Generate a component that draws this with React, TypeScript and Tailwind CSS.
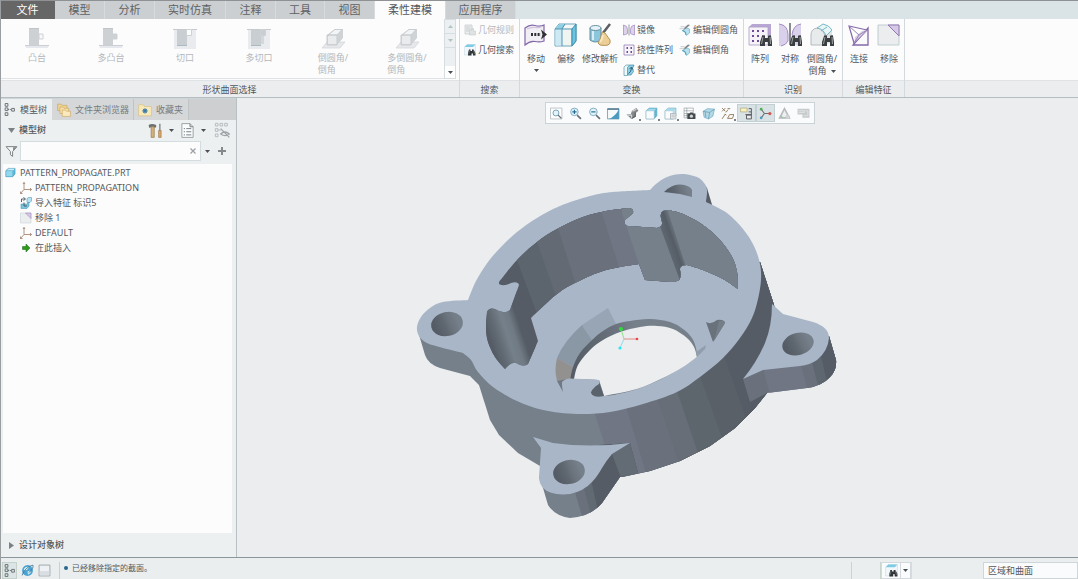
import React, { useState } from 'react';
import type { ReactNode } from 'react';
import clsx from 'clsx';

interface IconProps {
  size?: number;
  children: ReactNode;
}

// All icons are drawn on a 24 unit grid
function Icon({ size = 24, children }: IconProps) {
  return (
    <svg width={size} height={size} viewBox="0 0 24 24" fill="none" className="shrink-0" aria-hidden="true">
      {children}
    </svg>
  );
}

function Caret({ up = false, muted = false }: { up?: boolean; muted?: boolean }) {
  return (
    <svg width="5" height="3" viewBox="0 0 5 3" className="shrink-0" aria-hidden="true">
      <path d={up ? 'M0 3h5L2.5 0z' : 'M0 0h5L2.5 3z'} fill={muted ? '#b3c4bd' : '#4b5054'} />
    </svg>
  );
}

const binoculars = (
  <g>
    <path d="M14 13q1.500-1 3 0v2h3v-2q1.500-1 3 0l1 6v4h-4v-4h-3v4h-5v-4z" fill="#3a3e40" />
    <path d="M15 14l-1.500 7M22 14l.5 7" stroke="#a7abac" strokeWidth=".9" />
    <path d="M14.500 12.500h2.500M20.500 12.500H23" stroke="#6f7476" />
  </g>
);

const bossIcon = (filled: boolean) => (
  <>
    <path d="M4 1h10v17H4z" fill="#cdd1d4" />
    <path d="M4 1h10v1H4z" fill="#bfc5c8" />
    <path d="M14 7h4v5h-4z" fill={filled ? '#cdd1d4' : '#f7f8f9'} stroke="#cdd1d4" />
    <path d="M0 18h24l-1 3H1z" fill="#e6e8ed" />
    <path d="M0 18.500h24" stroke="#cbd0d4" />
  </>
);

const cutIcon = (filled: boolean) => (
  <>
    <path d="M1 2h22v20H1z" fill="#e9ebef" />
    <path d="M0 2.500h24" stroke="#c6cacf" />
    <path d="M4 3h10v16H4z" fill="#c9ced2" />
    <path d="M13.500 2.500h5v6h-5z" fill={filled ? '#c9ced2' : '#fbfcfc'} stroke="#cdd2d5" />
    {filled && <path d="M14 9h3v8h-3z" fill="#d4d8db" />}
    <path d="M4 18.500h10" stroke="#a9bac3" />
  </>
);

const roundIcon = (
  <>
    <path d="M1 21l5-6h18l-5 6z" fill="#e6e8ea" stroke="#d3d7da" strokeWidth=".8" />
    <path d="M6 18V8l8-6h8v9l-6 7z" fill="#cfd3d5" />
    <path d="M7 17V9q1-1 3-1h6v9z" fill="#e9ebec" />
    <path d="M7 8l7-5.500h7L16 8z" fill="#f3f4f5" stroke="#c3c8ca" strokeWidth=".8" />
    <path d="M6 18V8h10v10z" stroke="#c8cdcf" />
  </>
);

const rulesIcon = (
  <>
    <path d="M2 2h14v18H2z" fill="#eceeee" stroke="#c4c8ca" strokeWidth="1.500" />
    <path d="M4 6h9M4 10h9M4 14h6" stroke="#c9cdcf" strokeWidth="2" />
    <path d="M11 12h5V9h3v5h4v8H11z" fill="#e0e3e4" stroke="#bcc1c4" />
  </>
);

const geoSearchIcon = (
  <>
    <path d="M1 6l5-5h17v15l-5 6H1z" fill="#f1f7fa" stroke="#c3d8e0" />
    <path d="M1 6l5-5h17l-5 5z" fill="#7fcbe4" />
    <path d="M10 11h3v3h3v-3h3l4 7v5h-5v-4h-3v4H8v-5z" fill="#303436" />
    <path d="M11 13l-1.500 7M19 13l2.500 7" stroke="#868b8e" strokeWidth="1.200" />
  </>
);

const moveIcon = (
  <>
    <path d="M1 5q5-4 10-2.500T20 2v16q-4 1.500-9 .5T1 22z" fill="#f1eff4" stroke="#8468a8" strokeWidth="1.200" />
    <path d="M3 6q4-2 8-1.500t7-1" stroke="#cfc3de" strokeWidth="1.200" />
    <path d="M7 11.500h10" stroke="#2e3032" strokeWidth="3" strokeDasharray="2 1.300" />
    <path d="M17 6.500l6 5-6 5 1.500-5z" fill="#2e3032" />
  </>
);

const offsetIcon = (
  <>
    <path d="M1 6l4-5h17v17l-4 5H1z" fill="#f5f8fa" stroke="#6ba3b9" />
    <path d="M1.500 6.500H8v16H1.500z" fill="#cde9f3" />
    <path d="M1.500 6L5 1.500h6L8 6z" fill="#8dd0e6" />
    <path d="M8 6l3-5M8 6v17M1 6h17v17" stroke="#4f93ae" />
    <path d="M9 7h8v15H9z" fill="#f1f5f2" />
    <path d="M18 6l4-5v17l-4 5z" fill="#6ac3e0" stroke="#3f8fae" />
  </>
);

const analyticIcon = (
  <>
    <path d="M2 5v12q5 4 11 0V5z" fill="#8cc6dc" stroke="#668d9c" />
    <ellipse cx="7.500" cy="5" rx="5.500" ry="2.500" fill="#e5f2f7" stroke="#668d9c" />
    <path d="M5 8v9" stroke="#d7eef6" strokeWidth="2" />
    <path d="M22 1l-7 9" stroke="#5b5f61" strokeWidth="2.500" />
    <path d="M14 9l3 1 5 7q1 4-2 5t-8 0l-2-2q3-4 4-11z" fill="#edcf96" stroke="#b39457" />
    <path d="M15 12q-1 5-3 7" stroke="#f8e7c2" strokeWidth="2" />
  </>
);

const mirrorIcon = (
  <>
    <path d="M1 2q8 1 8 9v8q-3 2-8 3zM23 2q-8 1-8 9v8q3 2 8 3z" fill="#dcd2ea" stroke="#9980ba" strokeWidth="1.300" />
    <path d="M12 1v22" stroke="#8b9094" strokeWidth="1.800" />
  </>
);

const patternIcon = (
  <>
    <path d="M2 2h20v20H2z" fill="#f7f5fa" stroke="#8e78ad" strokeWidth="1.500" />
    <path d="M7 6h3v4H7zM15 6h3v4h-3zM7 14h3v4H7zM15 14h3v4h-3z" fill="#6d4b96" />
  </>
);

const replaceIcon = (
  <>
    <path d="M2 6l4-4h7v17l-4 4H2z" fill="#f1f8fa" stroke="#4f93ae" strokeWidth="1.300" />
    <path d="M9 7l4-5h9l-3 7 2 6-5 7H9z" fill="#8ccfe6" stroke="#3b83a1" strokeWidth="1.300" />
    <path d="M11 19q5-2 6-11M13 10l4-4 3 5" stroke="#23546b" strokeWidth="1.800" />
  </>
);

const editRoundIcon = (
  <>
    <path d="M1 9h9M3 5h8" stroke="#d0d4d6" strokeWidth="2.500" />
    <path d="M9 11l6-3 6 2v8l-6 5q0-7-6-8z" fill="#b9e0ee" stroke="#68b0cb" strokeWidth="1.300" />
    <path d="M22 2l-9 8-3 1 1-4 7-6" fill="#83888b" />
    <path d="M6 13l6 2 2 7" stroke="#4e9fbe" strokeWidth="2" />
  </>
);

const patternFindIcon = (
  <>
    <path d="M1 4l3-3h19v16l-3 4H1z" fill="#b9a7d3" />
    <path d="M1 4h19v18H1z" fill="#f5f3f8" stroke="#a999c2" strokeWidth=".8" />
    {[8, 13, 18].map(y => (
      <path key={y} d={`M4 ${y - 1}h2v2H4zM9 ${y - 1}h2v2H9zM14 ${y - 1}h2v2h-2z`} fill="#6d4b96" />
    ))}
    {binoculars}
  </>
);

const symmetryFindIcon = (
  <>
    <path d="M1 1q9 1 9 11v6q-2 5-9 5zM23 1q-8 1-9 11v6q2 5 9 5z" fill="#d9d0ec" />
    <path d="M1 1q9 1 9 11v6q-2 4-7 5M23 1q-8 1-9 11" stroke="#a48dc4" />
    <path d="M12 0v22" stroke="#898d90" strokeWidth="2" />
    {binoculars}
  </>
);

const roundFindIcon = (
  <>
    <path d="M1 22V12Q1 6 7 5q7 1 8 9v8z" fill="#e8ebec" stroke="#b5babc" />
    <path d="M15 22v-9l7-6v12z" fill="#dde1e3" />
    <path d="M7 5l6-4q6 1 9 6l-6 6Q14 6 7 5z" fill="#e9f6f8" stroke="#77b9c2" />
    <path d="M17 4l-6 4" stroke="#77b9c2" />
    {binoculars}
  </>
);

const connectIcon = (
  <>
    <path d="M6 22h15V5z" fill="#faf9fc" stroke="#8468a8" strokeWidth="1.300" />
    <path d="M2 3l18 4L7 20z" fill="#fff" stroke="#8468a8" strokeWidth="1.200" />
    <path d="M7 20l13-13-5 1-7 6z" fill="#d9d0e6" />
    <path d="M2 3l10 9 8-5M7 20l5-8" stroke="#9a83b8" />
  </>
);

const removeIcon = (
  <>
    <path d="M1 2h21v20H1z" fill="#ebedee" stroke="#c0cdd0" />
    <path d="M11 2h11v11z" fill="#d5c9e6" stroke="#9178b3" />
  </>
);

const modelTreeIcon = (
  <g stroke="#6c7174" strokeWidth="1.800">
    <path d="M4 1h5v5H4zM4 9h5v5H4zM4 18h5v5H4zM16 10h5v5h-5z" />
    <path d="M9 12h7" strokeDasharray="2 1.500" />
  </g>
);

const foldersIcon = (
  <>
    <path d="M1 2h6l2 2h8v9H1z" fill="#f0d292" stroke="#c4a05a" />
    <path d="M5 7h5l2 2h8v9H5z" fill="#f7dfa9" stroke="#c4a05a" />
    <path d="M9 12h5l2 2h7v9H9z" fill="#fbe9be" stroke="#c4a05a" />
  </>
);

const favoriteIcon = (
  <>
    <path d="M1 3h8l2 3h12v16H1z" fill="#f9e8b8" stroke="#d8bb78" />
    <path d="M12 9v9M7.500 13.500h9M9 10.500l6 6M15 10.500l-6 6" stroke="#3c7ca6" strokeWidth="2" />
  </>
);

const csysIcon = (
  <g stroke="#a07b63" strokeWidth="1.600">
    <path d="M8 1v14h15M8 15l-7 8" />
    <path d="M6 4l2-3 2 3M20 12l3 3-3 3M1 19v4h4" />
  </g>
);

const importIcon = (
  <>
    <path d="M2 14h12l4-4v8l-4 5H2z" fill="#7ac6e0" stroke="#3d8bad" />
    <path d="M14 3l3-2h6v7l-3 3h-6z" fill="#b3e2f1" stroke="#3d8bad" />
    <path d="M3 10V4h6M7 1l4 3-4 3M8 11v7h6" stroke="#43505a" strokeWidth="1.800" />
  </>
);

const partIcon = (
  <>
    <path d="M2 8l5-5h15v12l-5 6H2z" fill="#5cbfe2" stroke="#347f9f" />
    <path d="M3 8l5-4h13l-4 4z" fill="#c9edf8" />
    <path d="M2 8h15v13H2z" fill="#92d8ee" stroke="#4a9cbd" />
  </>
);

const insertIcon = <path d="M5 9h7V4l8 8-8 8v-5H5z" fill="#2f9a1e" stroke="#19630f" />;

const toolsIcon = (
  <>
    <path d="M1 3q5-3 12 0v4H9v-1H6L2 8z" fill="#6c7073" />
    <path d="M5 6h5v17H5z" fill="#d6b07a" stroke="#8d6e42" />
    <path d="M19 1v11" stroke="#767b7e" strokeWidth="2" />
    <path d="M17 12h4v11h-4z" fill="#e0a968" stroke="#8d6e42" />
  </>
);

const docIcon = (
  <>
    <path d="M3 1h13l5 5v17H3z" fill="#fbfcfc" stroke="#979ea2" strokeWidth="1.500" />
    <path d="M16 1v5h5M6 9h2M6 14h2M6 19h2M10 9h8M10 14h8M10 19h8" stroke="#6f7880" strokeWidth="1.500" />
  </>
);

const hiddenTreeIcon = (
  <g stroke="#b2b6b8" strokeWidth="1.300">
    <path d="M2 2h4v4H2zM2 10h4v4H2zM2 18h4v4H2zM9 2h4v4H9zM16 2h4v4h-4zM6 12h5" />
    <path d="M10 18q6-6 13 0-6 5-13 0zM10 10l13 13" stroke="#9da2a5" strokeWidth="1.800" />
  </g>
);

const filterIcon = (
  <>
    <path d="M2 3h20l-8 9v9l-4-3v-6z" fill="#f5f6f6" stroke="#7b8184" strokeWidth="1.800" />
    <path d="M15 4h7l-7 7z" fill="#7f8588" />
  </>
);

const zoomIcon = (mark: string) => (
  <>
    <path d="M15 15l7 7" stroke="#6a7073" strokeWidth="3" />
    <circle cx="10" cy="9" r="7" fill="#e4f3f9" stroke="#6c9fb7" strokeWidth="1.500" />
    <path d={mark} stroke="#276f96" strokeWidth="2.200" />
  </>
);

const cube = (fill: string) => (
  <>
    <path d="M2 7l6-5h14v14l-5 6H2z" fill={fill} stroke="#79aabe" strokeWidth="1.200" />
    <path d="M2 7h15v15H2z" fill="#f9fbfc" stroke="#a6bcc5" />
    <path d="M3 7l5-4h13l-4 4z" fill="#a6dbec" />
  </>
);

const viewTools: { name: string; icon: ReactNode; menu?: boolean; active?: boolean }[] = [
  {
    name: '重新调整',
    icon: (
      <>
        <path d="M1 2h21v20H1z" fill="#fff" stroke="#b3b9bc" strokeWidth="1.500" />
        <circle cx="11" cy="11" r="5.500" fill="#e4f3f9" stroke="#5f93ab" strokeWidth="1.500" />
        <path d="M15 15l6 6" stroke="#6a7073" strokeWidth="2.500" />
      </>
    ),
  },
  { name: '放大', icon: zoomIcon('M6 9h8M10 5v8') },
  { name: '缩小', icon: zoomIcon('M6 9h8') },
  {
    name: '重画',
    icon: (
      <>
        <path d="M1 3h21v19H1z" fill="#f6fafb" stroke="#6b98ad" strokeWidth="1.500" />
        <path d="M22 4v18H3Q15 18 22 4z" fill="#4c9abd" />
        <path d="M1 4h21" stroke="#37627a" strokeWidth="2" />
      </>
    ),
  },
  {
    name: '渲染',
    menu: true,
    icon: (
      <>
        <path d="M1 14l8-1 2-6 8-5 4 5-5 4v7l-8 4z" fill="#85898c" />
        <path d="M3 15h7l1 6M12 8l7-4" stroke="#d4d7d8" strokeWidth="2" />
        <path d="M17 10v7l-6 4" stroke="#565b5e" strokeWidth="2" />
      </>
    ),
  },
  { name: '显示样式', menu: true, icon: cube('#58b8d8') },
  {
    name: '已保存方向',
    menu: true,
    icon: (
      <>
        {cube('#b9dfec')}
        <path d="M12 12h10v10H12z" fill="#e9ecee" stroke="#a9b0b3" strokeWidth="1.500" />
        <path d="M14 15h6M14 18h6" stroke="#979ea2" />
      </>
    ),
  },
  {
    name: '视图管理器',
    icon: (
      <>
        <path d="M2 2h17v18H2zM2 7h17M2 12h17M2 16h10M7 2v18" fill="#fff" stroke="#8f979b" strokeWidth="1.200" />
        <path d="M8 12h4l1-2h5l1 2h4v10H8z" fill="#43484b" />
        <circle cx="15.500" cy="17" r="3" fill="#cfd4d6" />
      </>
    ),
  },
  {
    name: '透视图',
    icon: (
      <>
        <path d="M2 8l8-5 13 1-3 13-8 5-8-3z" fill="#b3d8e6" stroke="#6fabc4" strokeWidth="1.300" />
        <path d="M2 8l12 2 9-6M14 10l-2 12M7 19L6 9" stroke="#4a86a0" />
      </>
    ),
  },
  {
    name: '基准显示',
    menu: true,
    icon: (
      <g stroke="#8b6f50" strokeWidth="1.600">
        <path d="M2 2l6 6M8 2L2 8M12 3h5M9 10l4-5" />
        <path d="M2 22l6-9M7 13l3 2M12 21h9l3-7h-8z" />
      </g>
    ),
  },
  {
    name: '注释显示',
    active: true,
    icon: (
      <>
        <path d="M1 2h12v7H1z" fill="#fbf3bd" stroke="#a9a278" strokeWidth="1.200" />
        <path d="M16 3h5v6h-5M10 14h11M21 9v6" stroke="#585d60" strokeWidth="1.800" />
        <path d="M12 15h9v7h-9z" fill="#e9ecee" stroke="#585d60" strokeWidth="1.800" />
      </>
    ),
  },
  {
    name: '旋转中心',
    active: true,
    icon: (
      <>
        <path d="M10 12L4 4M10 12h10M10 12l-6 8" stroke="#6c7174" strokeWidth="2" />
        <circle cx="4" cy="4" r="2.500" fill="#4fae57" />
        <circle cx="20" cy="12" r="3" fill="#cf5750" />
        <circle cx="4" cy="20" r="2.500" fill="#4c9ac2" />
      </>
    ),
  },
  {
    name: '模拟',
    icon: (
      <>
        <path d="M12 3l9 17H3z" stroke="#b7bbbd" strokeWidth="3" fill="#eceeef" />
        <circle cx="18" cy="18" r="4" fill="#cfd3d4" />
        <path d="M5 15l4 6" stroke="#a2c4af" strokeWidth="2" />
      </>
    ),
  },
  {
    name: '暂停',
    icon: (
      <>
        <path d="M1 3h22v17H10v-6H1z" fill="#c7cbcd" />
        <path d="M3 7h11v3H3M16 7h4v9h-8" stroke="#e4e7e8" strokeWidth="1.500" />
      </>
    ),
  },
];

const menuTabs = [
  { name: '模型', cls: 'w-[50px]' },
  { name: '分析', cls: 'w-[50px]' },
  { name: '实时仿真', cls: 'w-[71px]' },
  { name: '注释', cls: 'w-[50px]' },
  { name: '工具', cls: 'w-[49px]' },
  { name: '视图', cls: 'w-[50px]' },
  { name: '柔性建模', cls: 'w-[71px]' },
  { name: '应用程序', cls: 'w-[70px]' },
];

const gallery = [
  { name: ['凸台'], icon: bossIcon(false) },
  { name: ['多凸台'], icon: bossIcon(true) },
  { name: ['切口'], icon: cutIcon(false) },
  { name: ['多切口'], icon: cutIcon(true) },
  { name: ['倒圆角/', '倒角'], icon: roundIcon },
  { name: ['多倒圆角/', '倒角'], icon: roundIcon },
];

const treeRows = [
  { name: 'PATTERN_PROPAGATION', icon: csysIcon },
  { name: '导入特征 标识5', icon: importIcon },
  { name: '移除 1', icon: removeIcon },
  { name: 'DEFAULT', icon: csysIcon },
  { name: '在此插入', icon: insertIcon },
];

function Group({ title, className, children }: { title: string; className?: string; children: ReactNode }) {
  return (
    <section className={clsx('flex flex-col border-r border-[#d3d9dc]', className)}>
      <div className="flex h-[61px] bg-[#fcfcfd]">{children}</div>
      <h2 className="flex h-[17px] items-center justify-center border-t border-[#e0e3e5] bg-[#ebedef] pt-px">{title}</h2>
    </section>
  );
}

function BigButton({ label, icon, className, menu }: { label: string[]; icon: ReactNode; className: string; menu?: boolean }) {
  const last = label.length - 1;
  return (
    <button className={clsx('flex flex-col items-center pt-1 hover:bg-[#e6eff3]', className)}>
      <Icon>{icon}</Icon>
      <span className="mt-1.5 flex flex-col items-center whitespace-nowrap leading-3">
        {label.map((line, i) => (
          <span key={line} className="flex items-center gap-1">
            {line}
            {menu && last > 0 && i === last && <Caret />}
          </span>
        ))}
      </span>
      {menu && last === 0 && <span className="mt-1"><Caret /></span>}
    </button>
  );
}

function SmallButton({ label, icon, disabled }: { label: string; icon: ReactNode; disabled?: boolean }) {
  return (
    <button
      disabled={disabled}
      className={clsx('flex h-5 items-center gap-0.5 whitespace-nowrap', disabled && 'text-[#b6babc]')}
    >
      <Icon size={12}>{icon}</Icon>
      {label}
    </button>
  );
}

// Smooth curve through "x,y x,y ..." points, continued from the first one
function curve(text: string, start = 'M') {
  const p = text.split(' ').map(s => s.split(',').map(Number));
  let d = `${start}${p[0][0]} ${p[0][1]}`;
  for (let i = 0; i < p.length - 1; i++) {
    const a = p[i - 1] ?? p[i];
    const b = p[i];
    const c = p[i + 1];
    const e = p[i + 2] ?? c;
    d += `C${b[0] + (c[0] - a[0]) / 6} ${b[1] + (c[1] - a[1]) / 6} ${c[0] - (e[0] - b[0]) / 6} ${c[1] - (e[1] - b[1]) / 6} ${c[0]} ${c[1]}`;
  }
  return d;
}

const topFace =
  curve('468,300 476,281 488,262 501,247 517,232 537,218 560,206 590,196 613,192 650,190') +
  curve('650,190 656,184 667,177 682,174 697,177 704,183 707,190 706,202', 'L') +
  curve('706,202 727,213 743,229 754,246 760,264 761,280 758,299 752,318 740,338 723,358 700,377 677,392 643,404 610,412 577,414 543,410 517,401 493,387 478,372 471,360 463,353', 'L') +
  curve('463,353 443,348 427,343 419,336 417,327 421,317 430,308 443,302 468,300', 'L') +
  'z';

const wellOutline =
  curve('499,282 517,260 537,242 557,229 583,217 606,211 629,208') +
  'Q634 209 633 213L625 220Q624 226 628 226L657 228Q663 227 662 222Q659 213 663 211' +
  curve('668,210 683,214 703,225 720,240 732,257 737,272 738,289', 'L') +
  curve('738,289 723,279 703,270 687,265', 'L') +
  'Q679 265 680 270Q682 280 677 281Q674 282 671 282L645 280L639 264' +
  curve('639,264 620,267 600,272 577,282 557,294 531,318', 'L') +
  'L538 341L528 364Q524 367 518 364Q512 360 505 369' +
  curve('505,369 495,357 488,342 486,328 487,312', 'L') +
  'Q489 307 495 309Q504 315 510 310L519 285Q518 281 511 283Q504 287 499 284z';

// Shaded part. The coordinates are those of the whole work area.
function PartModel() {
  return (
    <svg viewBox="237 98 841 459" className="block h-full w-full" role="img" aria-label="PATTERN_PROPAGATE">
      <defs>
        <linearGradient id="bore" x1="0" x2="1" y1="0.15" y2="0">
          <stop offset="0.05" stopColor="#555c65" />
          <stop offset="0.35" stopColor="#5f6771" />
          <stop offset="0.55" stopColor="#6c747e" />
          <stop offset="0.8" stopColor="#75808a" />
        </linearGradient>
        <linearGradient id="pocket" gradientUnits="userSpaceOnUse" x1="488" y1="340" x2="527" y2="327">
          <stop offset="0.05" stopColor="#555c65" />
          <stop offset="0.25" stopColor="#626b74" />
          <stop offset="0.48" stopColor="#75808a" />
          <stop offset="0.66" stopColor="#707a84" />
          <stop offset="0.84" stopColor="#555c65" />
        </linearGradient>
        <linearGradient id="pillar" gradientUnits="userSpaceOnUse" x1="654" y1="228" x2="674" y2="221">
          <stop offset="0" stopColor="#74808a" />
          <stop offset="0.35" stopColor="#5d666f" />
          <stop offset="0.65" stopColor="#555c65" />
          <stop offset="1" stopColor="#76818b" />
        </linearGradient>
        <linearGradient id="rim" gradientUnits="userSpaceOnUse" x1="571" y1="370" x2="697" y2="345">
          <stop offset="0" stopColor="#555c65" />
          <stop offset="0.25" stopColor="#606872" />
          <stop offset="0.45" stopColor="#6f7683" />
          <stop offset="0.55" stopColor="#75808a" />
          <stop offset="1" stopColor="#75808a" />
        </linearGradient>
        <clipPath id="bodyClip">
          <path d="M470 340L479 385L490 420L499 435L518 453L540 466L580 477L622 477L650 471L680 461L710 446L735 428L755 408L767 393L779 340L774 305L760 262L600 250z" />
        </clipPath>
        <clipPath id="wellClip">
          <path d={wellOutline} />
        </clipPath>
        <clipPath id="lowerLug">
          <path d="M539 477L543 488L548 505Q555 516 570 518Q590 517 602 503L620 477L638 473L630 443L600 445z" />
        </clipPath>
        <clipPath id="rightLug">
          <path d="M743 379L750 402L767 393L807 388Q822 386 830 377Q837 370 836 360L829 336L790 350z" />
        </clipPath>
      </defs>

      {/* lug behind the ring */}
      <path d="M704 184L707 188L713 208L700 206z" fill="#555c65" />

      {/* outer wall, facet by facet */}
      <g clipPath="url(#bodyClip)">
        <path d="M460 240H800V490H460z" fill="#75808a" />
        <path d="M592 405L616 480L800 490V240H592z" fill="#717685" />
        <path d="M624 400L648 480H800V240H624z" fill="#6a717c" />
        <path d="M655 392L683 475H800V240H655z" fill="#676e78" />
        <path d="M676 388L702 465H800V240H676z" fill="#5d656d" />
        <path d="M698 370L728 455H800V240H698z" fill="#596068" />
        <path d="M722 350L752 435H800V240H722z" fill="#555c65" />
        <path d="M620 478L650 472L680 462L710 447L735 429L755 409" stroke="#505761" strokeWidth="2" fill="none" />
      </g>

      {/* left lug side */}
      <path d="M417 328L425 355Q428 364 440 368L470 376L479 385L490 390L465 340z" fill="#75808a" />

      {/* top face */}
      <path d={topFace} fill="#a9b6c8" />
      <path d="M664 192Q672 184 680 184.500Q690 185 692 190L692 197L680 194z" fill="url(#bore)" />

      {/* well walls */}
      <g clipPath="url(#wellClip)">
        <path d="M480 200H745V380H480z" fill="#555c65" />
        <path d="M517 260L539 319L745 320V200H517z" fill="#5c656d" />
        <path d="M537 242L556 296L745 300V200H537z" fill="#636a74" />
        <path d="M557 225L576 285L745 300V200H557z" fill="#6a717c" />
        <path d="M601 210L620 270L745 300V200H601z" fill="#717685" />
        <path d="M622 213L645 282L745 300V200H622z" fill="#75808a" />
        <path d="M652 205L682 286L692 286L666 205z" fill="url(#pillar)" />
        <path d="M482 300L508 300L518 290L545 376H482z" fill="url(#pocket)" />
      </g>

      {/* counterbore */}
      <path d="M608 308L582 325L592 340L616 324z" fill="#98a5b5" />
      <path d="M582 325Q564 341 557 358L573 367Q580 352 592 340z" fill="#8a97a5" />
      <path d="M557 358Q554 370 557 381L571 380L573 367z" fill="#92918f" />
      <path d="M557 381L563 392L562 382L567 379z" fill="#6f7883" />
      <path
        d={curve('570,381 573,367 580,353 592,340 603,331 616,324 630,321 650,319 670,322 683,329 692,338 696,348 697,357') + 'Q650 392 604 396L599 380z'}
        fill="url(#rim)"
      />
      <path
        d={curve('574,379 578,365 590,350 603,340 620,332 640,327 657,326 673,329 687,338 694,347 697,357') + curve('697,357 683,367 663,378 637,389 604,396', 'L') + 'L599 380z'}
        fill="#ebedee"
      />
      <path d="M697 357L696 352L706 345L705 349z" fill="#909dac" />
      <path d="M599 381L604 396Q596 398 592 395Q589 392 594 388z" fill="#5a626b" />
      <path d="M563 392L562 384Q562 379 570 378.500L595 379.500Q601 380 599 384L593 388Q588 393 595 397L580 405z" fill="#a9b6c8" />
      <path d="M706 322Q711 325 717 320Q724 319 725 323L713 342z" fill="#69717b" />
      <path d="M719 321Q725 320 725 323L714 341z" fill="#747e88" />

      {/* right lug */}
      <g clipPath="url(#rightLug)">
        <path d="M740 330H840V405H740z" fill="#6a717c" />
        <path d="M763 368L770 395H840V330H763z" fill="#717685" />
        <path d="M800 362L808 392H840V330H800z" fill="#6a717c" />
        <path d="M811 358L819 390H840V330H811z" fill="#5e666f" />
        <path d="M820 352L829 390H840V330H820z" fill="#555c65" />
      </g>
      <path
        d="M772 304L783 314L813 322Q829 327 829 338Q828 351 817 360Q810 365 800 366L763 370L743 379Q757 362 765 343Q772 326 772 304z"
        fill="#a9b6c8"
      />

      {/* lower lug */}
      <g clipPath="url(#lowerLug)">
        <path d="M535 440H640V520H535z" fill="#75808a" />
        <path d="M573 485L583 520H640V440H573z" fill="#6a717c" />
        <path d="M582 480L592 520H640V440H582z" fill="#616973" />
        <path d="M590 475L600 520H640V440H590z" fill="#555c65" />
        <path d="M612 454L621 478L640 474V440H612z" fill="#636b74" />
      </g>
      <path
        d="M533 437L553 443Q590 448 630 443L612 454Q606 461 602 468Q597 477 592 482Q584 491 570 494Q551 496 543 488Q539 483 539 477L541 448z"
        fill="#a9b6c8"
      />

      <ellipse cx="447" cy="324" rx="16" ry="12" transform="rotate(-12 447 324)" fill="url(#bore)" />
      <ellipse cx="798" cy="344" rx="16" ry="11" transform="rotate(-15 798 344)" fill="url(#bore)" />
      <ellipse cx="569" cy="472" rx="16" ry="12" transform="rotate(-12 569 472)" fill="url(#bore)" />

      {/* spin centre */}
      <path d="M624 339L621 329" stroke="#8fe08a" />
      <path d="M624 339L637 339" stroke="#e08a8a" />
      <path d="M624 339L620 348" stroke="#8fdcec" />
      <circle cx="621" cy="329" r="2" fill="#2fdc3a" />
      <circle cx="637" cy="339" r="1.300" fill="#f04343" />
      <circle cx="620" cy="348" r="1.600" fill="#2de6f5" />
    </svg>
  );
}

export default function App() {
  const [tab, setTab] = useState('柔性建模');
  const [query, setQuery] = useState('');

  return (
    <div className="relative flex h-screen flex-col overflow-hidden bg-[#ebedee] font-['Noto_Sans','Noto_Sans_CJK_SC',sans-serif] text-[9px] leading-3 text-[#53585c] after:absolute after:inset-y-0 after:left-0 after:w-px after:bg-[#9a9ea0]">
      {/* Menu tabs */}
      <nav className="flex h-[19px] shrink-0 border-t border-[#8f9294] bg-[#dae3e6] text-[11px]">
        <button className="w-[55px] bg-[#666667] text-white">文件</button>
        {menuTabs.map(t => (
          <button
            key={t.name}
            onClick={() => setTab(t.name)}
            className={clsx(
              t.cls,
              'whitespace-nowrap border-r border-[#d8dbdd]',
              t.name === tab ? 'bg-[#fcfcfd]' : 'bg-[#cccfd1] text-[#5d6164]',
            )}
          >
            {t.name}
          </button>
        ))}
      </nav>

      {/* Ribbon */}
      <div className="flex shrink-0 border-b border-[#b4bec1] bg-[#fcfcfd]">
        <Group title="形状曲面选择" className="w-[460px]">
          <div className="mb-px flex flex-1 border-b border-[#dfe3e5] text-[#b3b8bb]">
            {gallery.map((g, i) => (
              <button key={i} disabled className="flex w-[74px] flex-col items-center pt-2">
                <Icon>{g.icon}</Icon>
                <span className="mt-px flex flex-col whitespace-nowrap text-left">
                  {g.name.map(line => <span key={line}>{line}</span>)}
                </span>
              </button>
            ))}
          </div>
          <div className="mb-px mr-[3px] flex w-[13px] flex-col border border-[#d5dde0] bg-[#ecf0f2]">
            <button aria-label="向上" className="flex h-[14px] items-center justify-center border-b border-[#d5dde0]"><Caret up muted /></button>
            <button aria-label="向下" className="flex h-[14px] items-center justify-center border-b border-[#d5dde0]"><Caret muted /></button>
            <button aria-label="更多" className="mt-auto flex h-3 items-center justify-center bg-white"><Caret /></button>
          </div>
        </Group>

        <Group title="搜索" className="w-[60px]">
          <div className="flex flex-col pl-1 pt-px">
            <SmallButton label="几何规则" icon={rulesIcon} disabled />
            <SmallButton label="几何搜索" icon={geoSearchIcon} />
          </div>
        </Group>

        <Group title="变换" className="w-[224px]">
          <BigButton label={['移动']} icon={moveIcon} className="ml-px w-[30px]" menu />
          <BigButton label={['偏移']} icon={offsetIcon} className="w-[30px]" />
          <BigButton label={['修改解析']} icon={analyticIcon} className="w-[38px]" />
          <div className="ml-1 flex flex-col pt-px">
            <SmallButton label="镜像" icon={mirrorIcon} />
            <SmallButton label="挠性阵列" icon={patternIcon} />
            <SmallButton label="替代" icon={replaceIcon} />
          </div>
          <div className="ml-1.5 flex flex-col pt-px">
            <SmallButton label="编辑倒圆角" icon={editRoundIcon} />
            <SmallButton label="编辑倒角" icon={editRoundIcon} />
          </div>
        </Group>

        <Group title="识别" className="w-[99px]">
          <BigButton label={['阵列']} icon={patternFindIcon} className="ml-px w-[30px]" />
          <BigButton label={['对称']} icon={symmetryFindIcon} className="w-[30px]" />
          <BigButton label={['倒圆角/', '倒角']} icon={roundFindIcon} className="w-[34px]" menu />
        </Group>

        <Group title="编辑特征" className="w-[62px]">
          <BigButton label={['连接']} icon={connectIcon} className="ml-px w-[30px]" />
          <BigButton label={['移除']} icon={removeIcon} className="w-[30px]" />
        </Group>

        <div className="flex flex-1 flex-col justify-end">
          <div className="h-[17px] border-t border-[#e0e3e5] bg-[#ebedef]" />
        </div>
      </div>

      {/* Work area */}
      <div className="flex min-h-0 flex-1">
        <aside className="flex w-[237px] shrink-0 flex-col border-r border-[#b9c0c3] bg-[#ecf0f1] pr-1">
          <div className="-mr-1 flex h-[22px] shrink-0 border-t border-[#cfd6d8] bg-[#cdcfd1]">
            <button className="flex w-[52px] items-center gap-1 bg-[#ecf0f1] pl-[3px]"><Icon size={13}>{modelTreeIcon}</Icon>模型树</button>
            <button className="flex w-[82px] items-center gap-1 border-r border-[#bfc4c6] bg-[#d5d7d8] pl-[5px] text-[#777b7e]"><Icon size={14}>{foldersIcon}</Icon>文件夹浏览器</button>
            <button className="flex w-[55px] items-center gap-1 border-r border-[#bfc4c6] bg-[#d5d7d8] pl-1 text-[#777b7e]"><Icon size={14}>{favoriteIcon}</Icon>收藏夹</button>
          </div>

          <div className="flex h-5 shrink-0 items-center pl-2">
            <button className="flex items-center gap-1 font-medium">
              <svg width="7" height="5" viewBox="0 0 7 5"><path d="M0 0h7L3.500 5z" fill="#7b8184" /></svg>
              模型树
            </button>
            <button aria-label="设置" className="ml-auto flex items-center gap-1.5"><Icon size={15}>{toolsIcon}</Icon><Caret /></button>
            <button aria-label="显示" className="ml-1.5 flex items-center gap-1.5"><Icon size={15}>{docIcon}</Icon><Caret /></button>
            <button aria-label="隐藏树" className="ml-2 mr-0.5"><Icon size={16}>{hiddenTreeIcon}</Icon></button>
          </div>

          <div className="flex h-[22px] shrink-0 items-center pl-[5px]">
            <Icon size={13}>{filterIcon}</Icon>
            <label className="ml-0.5 flex h-5 w-[181px] items-center border border-[#d3dde0] bg-[#fcfcfd] pr-1">
              <input
                type="text"
                aria-label="搜索模型树"
                value={query}
                onChange={e => setQuery(e.target.value)}
                className="w-full min-w-0 bg-transparent px-1 outline-none"
              />
              <button aria-label="清除" onClick={() => setQuery('')}>
                <svg width="6" height="6" viewBox="0 0 6 6"><path d="M.5.5l5 5M5.500.5l-5 5" stroke="#9aa0a3" strokeWidth="1.200" /></svg>
              </button>
            </label>
            <button aria-label="搜索选项" className="ml-1"><Caret /></button>
            <button aria-label="添加" className="ml-2">
              <svg width="8" height="8" viewBox="0 0 8 8"><path d="M4 0v8M0 4h8" stroke="#85898c" strokeWidth="2" /></svg>
            </button>
          </div>

          <ul className="ml-[3px] mt-0.5 min-h-0 flex-1 bg-[#fcfcfd] pt-px">
            <li className="flex h-[15px] items-center gap-1 pl-0.5"><Icon size={11}>{partIcon}</Icon>PATTERN_PROPAGATE.PRT</li>
            {treeRows.map(r => (
              <li key={r.name} className="flex h-[15px] items-center gap-[3px] pl-[17px]">
                <Icon size={12}>{r.icon}</Icon>
                {r.name}
              </li>
            ))}
          </ul>

          <button className="flex h-6 shrink-0 items-center gap-[5px] pl-[9px] font-medium">
            <svg width="5" height="7" viewBox="0 0 5 7"><path d="M0 0v7l5-3.500z" fill="#7b8184" /></svg>
            设计对象树
          </button>
        </aside>

        <main className="relative min-w-0 flex-1">
          <PartModel />
          <div className="absolute left-[308px] top-1 flex h-[22px] border border-[#cbd3d6] bg-[#fafbfc] p-px">
            {viewTools.map(v => (
              <button
                key={v.name}
                aria-label={v.name}
                className={clsx('relative flex w-[19px] items-center justify-center border', v.active ? 'border-[#c3d0d3] bg-[#d9e2e4]' : 'border-transparent')}
              >
                <Icon size={13}>{v.icon}</Icon>
                {v.menu && <span className="absolute bottom-0 right-0 size-0.5 bg-[#7b8084]" />}
              </button>
            ))}
          </div>
        </main>
      </div>

      {/* Status bar */}
      <footer className="flex h-[22px] shrink-0 items-stretch border-t border-[#8a969b] bg-[#eaeeef] pt-1">
        <button aria-label="模型树" className="ml-0.5 flex w-[15px] items-center justify-center border border-[#c4d2c9] bg-[#dce5e5]"><Icon size={13}>{modelTreeIcon}</Icon></button>
        <button aria-label="浏览器" className="ml-1 flex items-center">
          <Icon size={13}>
            <circle cx="12" cy="12" r="10" fill="#4aa3d1" />
            <path d="M5 9q5-6 10-3l-4 5-5 1zM12 14l5-2 1 4-5 4z" fill="#d4edf7" />
            <path d="M2 21Q7 6 22 2q2 6-8 14" stroke="#3c7595" strokeWidth="1.500" />
          </Icon>
        </button>
        <button aria-label="全屏" className="ml-1 flex items-center">
          <Icon size={13}>
            <path d="M2 2h20v20H2z" fill="#eef1f3" stroke="#90989c" strokeWidth="1.500" />
            <path d="M3 13h18v8H3z" fill="#d8dee2" />
          </Icon>
        </button>
        <p className="ml-2 flex items-start gap-1 border-l border-[#c4d2c9] pl-1 text-[8px]">
          <span className="mt-1 size-1 rounded-full bg-[#28688b]" />
          已经移除指定的截面。
        </p>
        <div className="ml-auto w-[30px] border-x border-[#c8d6cd]" />
        <button aria-label="查找" className="flex w-5 items-center justify-center border border-[#d3d9dc] bg-[#fafbfc]"><Icon size={13}>{geoSearchIcon}</Icon></button>
        <button aria-label="查找选项" className="flex w-[10px] items-center justify-center border border-l-0 border-[#d3d9dc] bg-[#fafbfc]"><Caret /></button>
        <div className="w-[72px] border-l border-[#d6dcde]" />
        <select aria-label="选择过滤器" className="w-[95px] appearance-none border border-[#cfd6d9] bg-[#fafbfc] px-1 outline-none">
          <option>区域和曲面</option>
        </select>
      </footer>
    </div>
  );
}
